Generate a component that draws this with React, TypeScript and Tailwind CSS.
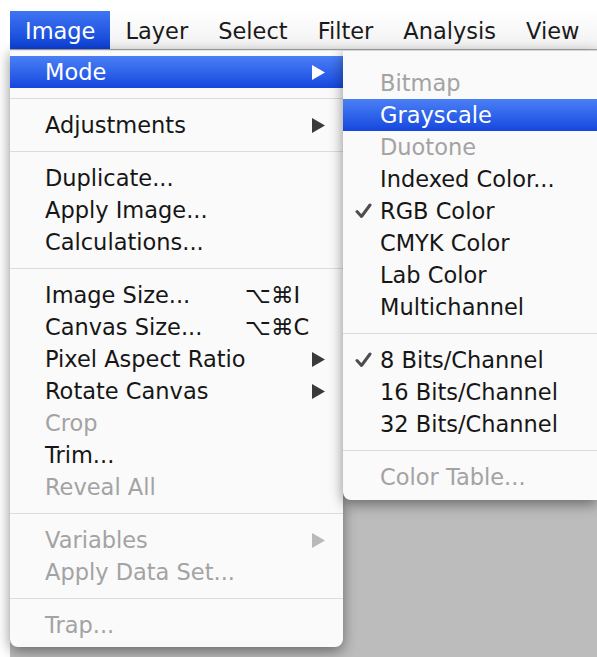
import React from 'react'

type Item =
  | 'sep'
  | {
      label: string
      arrow?: boolean
      active?: boolean
      disabled?: boolean
      checked?: boolean
      keys?: string
    }

const imageMenu: Item[] = [
  { label: 'Mode', arrow: true, active: true },
  'sep',
  { label: 'Adjustments', arrow: true },
  'sep',
  { label: 'Duplicate...' },
  { label: 'Apply Image...' },
  { label: 'Calculations...' },
  'sep',
  { label: 'Image Size...', keys: '⌥⌘I' },
  { label: 'Canvas Size...', keys: '⌥⌘C' },
  { label: 'Pixel Aspect Ratio', arrow: true },
  { label: 'Rotate Canvas', arrow: true },
  { label: 'Crop', disabled: true },
  { label: 'Trim...' },
  { label: 'Reveal All', disabled: true },
  'sep',
  { label: 'Variables', arrow: true, disabled: true },
  { label: 'Apply Data Set...', disabled: true },
  'sep',
  { label: 'Trap...', disabled: true },
]

const modeMenu: Item[] = [
  { label: 'Bitmap', disabled: true },
  { label: 'Grayscale', active: true },
  { label: 'Duotone', disabled: true },
  { label: 'Indexed Color...' },
  { label: 'RGB Color', checked: true },
  { label: 'CMYK Color' },
  { label: 'Lab Color' },
  { label: 'Multichannel' },
  'sep',
  { label: '8 Bits/Channel', checked: true },
  { label: '16 Bits/Channel' },
  { label: '32 Bits/Channel' },
  'sep',
  { label: 'Color Table...', disabled: true },
]

const menuBar = ['Image', 'Layer', 'Select', 'Filter', 'Analysis', 'View']

function Arrow({ color }: { color: string }) {
  return (
    <svg width="13" height="15" viewBox="0 0 13 15">
      <polygon points="0,0 13,7.5 0,15" fill={color} />
    </svg>
  )
}

function Check() {
  return (
    <svg width="17" height="16" viewBox="0 0 17 16">
      <path d="M2 8.5 L6.5 13.5 L15 2" fill="none" stroke="#4d4d4d" strokeWidth="3" strokeLinecap="round" strokeLinejoin="round" />
    </svg>
  )
}

function Row({ item, wide }: { item: Item; wide?: boolean }) {
  if (item === 'sep') {
    return (
      <div className="h-[21px] flex items-center">
        <div className="h-px w-full bg-[#dcdcdc]" />
      </div>
    )
  }
  const text = item.active ? 'text-white' : item.disabled ? 'text-[#a3a3a3]' : 'text-[#161616]'
  const arrowColor = item.active ? '#ffffff' : item.disabled ? '#b9b9b9' : '#3a3a3a'
  return (
    <div
      className={`h-[32px] flex items-center leading-[32px] ${text} ${
        item.active ? 'bg-gradient-to-b from-[#4b7ff6] to-[#1646de]' : ''
      }`}
    >
      <span className={`${wide ? 'w-[37px]' : 'w-[35px]'} shrink-0 pl-[12px] flex items-center`}>
        {item.checked && <Check />}
      </span>
      <span className="flex-1 whitespace-nowrap">{item.label}</span>
      {!wide && (
        <span className="w-[80px] mr-[18px] flex items-center justify-between">
          <span className="whitespace-nowrap">{item.keys ?? ''}</span>
          {item.arrow && <Arrow color={arrowColor} />}
        </span>
      )}
    </div>
  )
}

export default function App() {
  return (
    <div className="w-[597px] h-[657px] bg-white pl-[10px] pt-[11px] overflow-hidden font-['DejaVu_Sans',sans-serif] text-[22.5px]">
      <div className="h-[646px] bg-[#bcbcbc] flex flex-col">
        {/* menu bar */}
        <div className="h-[39px] shrink-0 flex bg-gradient-to-b from-[#ffffff] to-[#f1f1f1] border-b border-[#a9a9a9]">
          {menuBar.map((name, i) => (
            <div
              key={name}
              className={`h-[38px] px-[15px] leading-[40px] whitespace-nowrap ${
                i === 0
                  ? 'bg-gradient-to-b from-[#3f74f3] to-[#0c3fd5] text-white'
                  : 'text-[#1a1a1a]'
              }`}
            >
              {name}
            </div>
          ))}
        </div>

        <div className="flex items-start">
          {/* Image menu */}
          <div className="w-[333px] h-[597px] shrink-0 bg-[#fafafa] rounded-b-[8px] pt-[5px] pb-[7px] shadow-[0_4px_14px_rgba(0,0,0,0.45)] border-t border-[#e4e4e4]">
            {imageMenu.map((item, i) => (
              <Row key={i} item={item} />
            ))}
          </div>

          {/* Mode submenu */}
          <div className="relative z-10 flex-1 h-[450px] bg-[#fafafa] rounded-bl-[8px] pt-[16px] pb-[8px] shadow-[0_4px_14px_rgba(0,0,0,0.45)] border-t border-[#d6d6d6]">
            {modeMenu.map((item, i) => (
              <Row key={i} item={item} wide />
            ))}
          </div>
        </div>
      </div>
    </div>
  )
}
